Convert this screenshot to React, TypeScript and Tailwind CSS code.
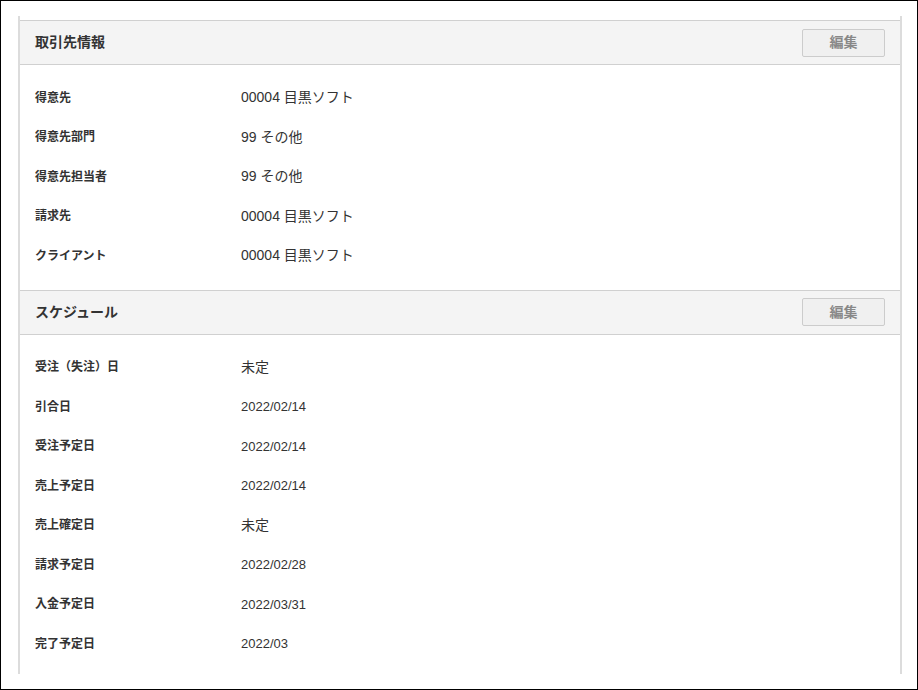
import React from 'react';

const font = { fontFamily: '"Liberation Sans", Arial, "Noto Sans CJK JP", sans-serif' };

const sections = [
  {
    title: '取引先情報',
    rows: [
      ['得意先', '00004 目黒ソフト'],
      ['得意先部門', '99 その他'],
      ['得意先担当者', '99 その他'],
      ['請求先', '00004 目黒ソフト'],
      ['クライアント', '00004 目黒ソフト'],
    ],
  },
  {
    title: 'スケジュール',
    rows: [
      ['受注（失注）日', '未定'],
      ['引合日', '2022/02/14'],
      ['受注予定日', '2022/02/14'],
      ['売上予定日', '2022/02/14'],
      ['売上確定日', '未定'],
      ['請求予定日', '2022/02/28'],
      ['入金予定日', '2022/03/31'],
      ['完了予定日', '2022/03'],
    ],
  },
];

export default function App() {
  return (
    <div className="w-[918px] h-[690px] border border-black bg-white overflow-hidden" style={font}>
      <div className="ml-[17px] mt-[15px] w-[884px] h-[658px] border-x-2 border-[#dcdcdc] pt-[4px]">
        {sections.map((s) => (
          <div key={s.title}>
            <div className="h-[45px] bg-[#f4f4f4] border-y border-[#d0d0d0] flex items-center justify-between pl-[15px] pr-[15px]">
              <span className="text-[14px] font-bold text-[#333]">{s.title}</span>
              <button className="w-[83px] h-[28px] bg-[#f0f0f0] border border-[#cccccc] rounded-[2px] text-[14px] text-[#888] font-bold">
                編集
              </button>
            </div>
            <div className="pt-[13px] pb-[14px]">
              {s.rows.map(([k, v]) => (
                <div key={k} className="h-[39.5px] flex items-center pl-[15px]">
                  <span className="w-[206px] text-[12px] font-bold text-[#333]">{k}</span>
                  <span className={(/^[0-9/]+$/.test(v) ? 'text-[13px]' : 'text-[14px]') + ' text-[#333]'}>{v}</span>
                </div>
              ))}
            </div>
          </div>
        ))}
      </div>
    </div>
  );
}
